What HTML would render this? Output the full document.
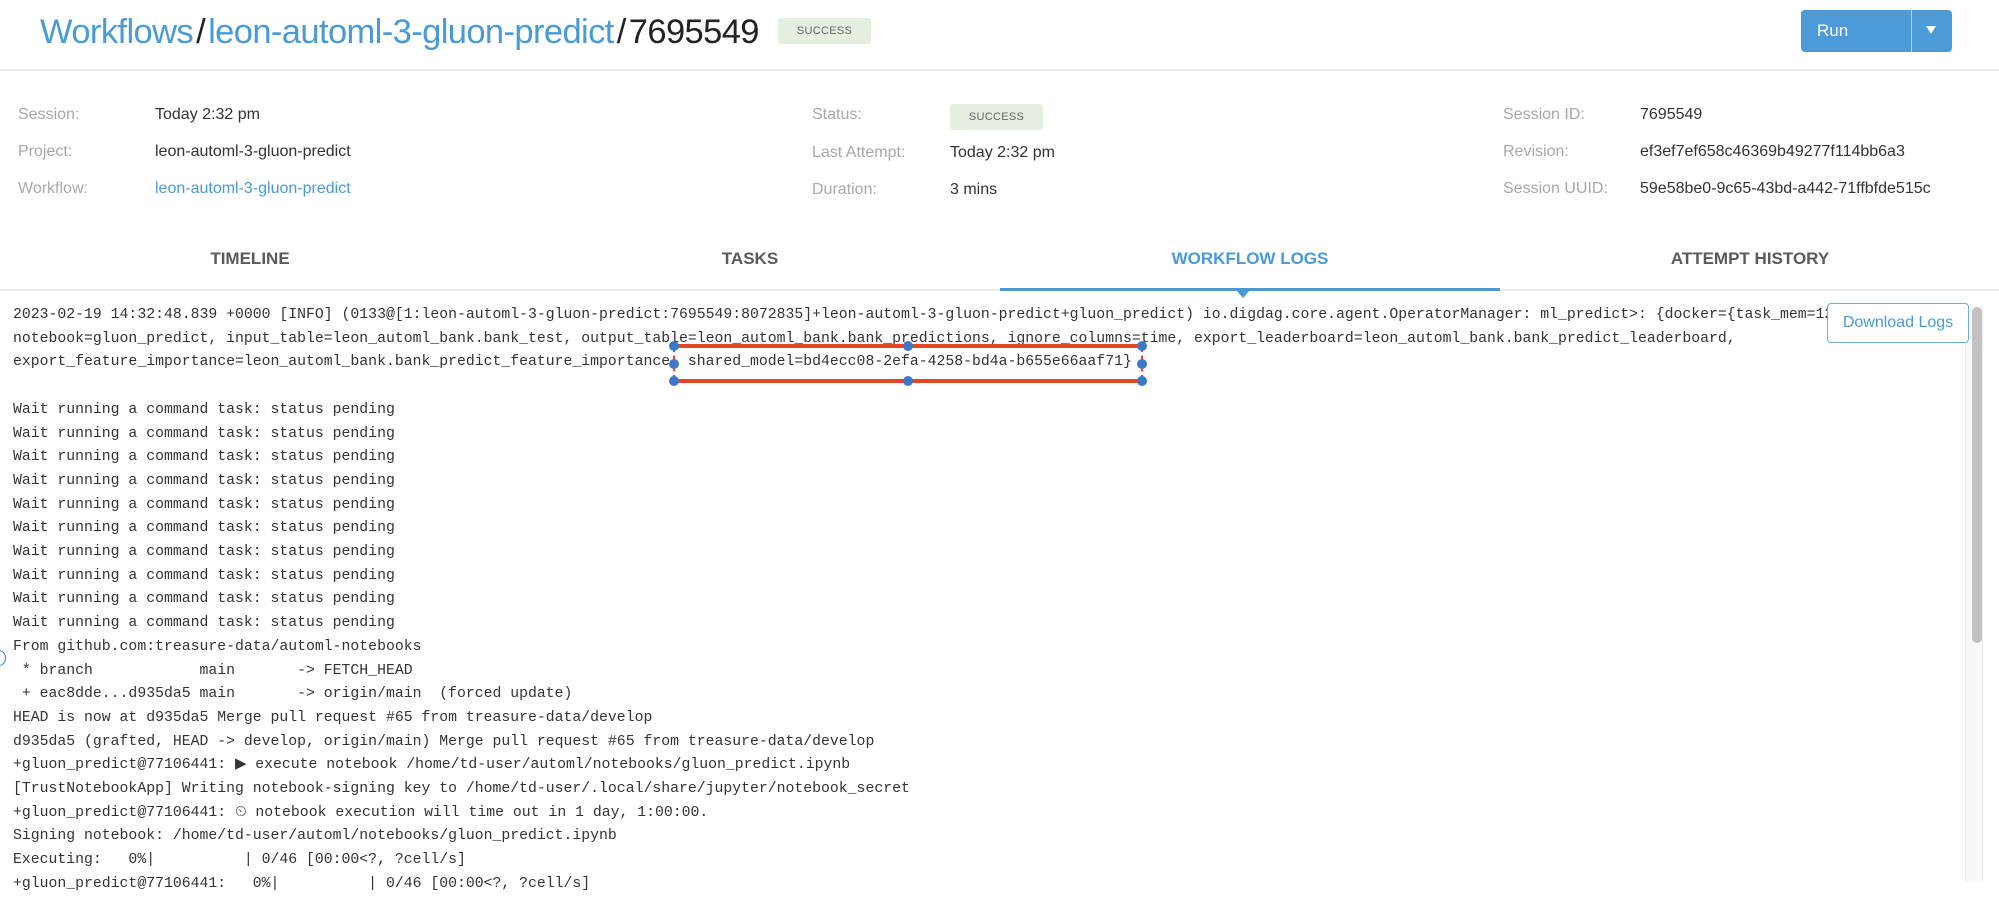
<!DOCTYPE html>
<html><head><meta charset="utf-8"><style>
*{margin:0;padding:0;box-sizing:border-box}
body{width:1999px;height:881px;overflow:hidden;background:#fff;font-family:"Liberation Sans",sans-serif;position:relative;color:#333}
.a{position:absolute;white-space:nowrap}
.blue{color:#4a9ad8}
.lbl{color:#a8a8a8;font-size:16px}
.val{color:#333;font-size:16px}
.badge{position:absolute;background:#e6efdf;color:#666;font-size:11px;border-radius:3px;text-align:center;letter-spacing:.3px}
.tab{position:absolute;top:249px;width:500px;text-align:center;font-size:17px;font-weight:bold;color:#5a5a5a}
.log{position:absolute;left:13px;top:304px;font-family:"Liberation Mono",monospace;font-size:14.8px;line-height:23.7px;color:#333;white-space:pre}
.dot{position:absolute;width:10px;height:10px;border-radius:50%;background:#3d78c8}
.sl{color:#222;margin:0 3px}
</style></head><body>
<div class="a" style="left:40px;top:10px;font-size:34.5px;line-height:44px;letter-spacing:-0.6px"><span class="blue">Workflows</span><span class="sl">/</span><span class="blue">leon-automl-3-gluon-predict</span><span class="sl">/</span><span style="color:#222">7695549</span></div>
<div class="badge" style="left:778px;top:18px;width:93px;height:26px;line-height:26px">SUCCESS</div>
<div class="a" style="left:1801px;top:10px;width:151px;height:42px;background:#4d9ad8;border-radius:4px"></div>
<div class="a" style="left:1911px;top:10px;width:1px;height:42px;background:#fff;opacity:.6"></div>
<div class="a" style="left:1817px;top:21px;color:#fff;font-size:17px">Run</div>
<div class="a" style="left:1926px;top:26px;width:0;height:0;border-left:5px solid transparent;border-right:5px solid transparent;border-top:8px solid #fff"></div>
<div class="a" style="left:0;top:69px;width:1999px;height:2px;background:#ebebeb"></div>

<div class="a lbl" style="left:18px;top:106px">Session:</div>
<div class="a val" style="left:155px;top:106px">Today 2:32 pm</div>
<div class="a lbl" style="left:18px;top:143px">Project:</div>
<div class="a val" style="left:155px;top:143px">leon-automl-3-gluon-predict</div>
<div class="a lbl" style="left:18px;top:180px">Workflow:</div>
<div class="a val blue" style="left:155px;top:180px;color:#4a9ad8">leon-automl-3-gluon-predict</div>

<div class="a lbl" style="left:812px;top:106px">Status:</div>
<div class="badge" style="left:950px;top:104px;width:93px;height:26px;line-height:26px">SUCCESS</div>
<div class="a lbl" style="left:812px;top:144px">Last Attempt:</div>
<div class="a val" style="left:950px;top:144px">Today 2:32 pm</div>
<div class="a lbl" style="left:812px;top:181px">Duration:</div>
<div class="a val" style="left:950px;top:181px">3 mins</div>

<div class="a lbl" style="left:1503px;top:106px">Session ID:</div>
<div class="a val" style="left:1640px;top:106px">7695549</div>
<div class="a lbl" style="left:1503px;top:143px">Revision:</div>
<div class="a val" style="left:1640px;top:143px">ef3ef7ef658c46369b49277f114bb6a3</div>
<div class="a lbl" style="left:1503px;top:180px">Session UUID:</div>
<div class="a val" style="left:1640px;top:180px">59e58be0-9c65-43bd-a442-71ffbfde515c</div>

<div class="tab" style="left:0">TIMELINE</div>
<div class="tab" style="left:500px">TASKS</div>
<div class="tab" style="left:1000px;color:#4a9ad8">WORKFLOW LOGS</div>
<div class="tab" style="left:1500px">ATTEMPT HISTORY</div>
<div class="a" style="left:0;top:289px;width:1999px;height:2px;background:#ebebeb"></div>
<div class="a" style="left:1000px;top:288px;width:500px;height:3px;background:#4a9ad8"></div>
<div class="a" style="left:1236px;top:290px;width:0;height:0;border-left:7px solid transparent;border-right:7px solid transparent;border-top:8px solid #4a9ad8"></div>

<div class="log">2023-02-19 14:32:48.839 +0000 [INFO] (0133@[1:leon-automl-3-gluon-predict:7695549:8072835]+leon-automl-3-gluon-predict+gluon_predict) io.digdag.core.agent.OperatorManager: ml_predict>: {docker={task_mem=12
notebook=gluon_predict, input_table=leon_automl_bank.bank_test, output_table=leon_automl_bank.bank_predictions, ignore_columns=time, export_leaderboard=leon_automl_bank.bank_predict_leaderboard,
export_feature_importance=leon_automl_bank.bank_predict_feature_importance, shared_model=bd4ecc08-2efa-4258-bd4a-b655e66aaf71}

Wait running a command task: status pending
Wait running a command task: status pending
Wait running a command task: status pending
Wait running a command task: status pending
Wait running a command task: status pending
Wait running a command task: status pending
Wait running a command task: status pending
Wait running a command task: status pending
Wait running a command task: status pending
Wait running a command task: status pending
From github.com:treasure-data/automl-notebooks
 * branch            main       -> FETCH_HEAD
 + eac8dde...d935da5 main       -> origin/main  (forced update)
HEAD is now at d935da5 Merge pull request #65 from treasure-data/develop
d935da5 (grafted, HEAD -> develop, origin/main) Merge pull request #65 from treasure-data/develop
+gluon_predict@77106441: ▶ execute notebook /home/td-user/automl/notebooks/gluon_predict.ipynb
[TrustNotebookApp] Writing notebook-signing key to /home/td-user/.local/share/jupyter/notebook_secret
+gluon_predict@77106441: ⏲ notebook execution will time out in 1 day, 1:00:00.
Signing notebook: /home/td-user/automl/notebooks/gluon_predict.ipynb
Executing:   0%|          | 0/46 [00:00&lt;?, ?cell/s]
+gluon_predict@77106441:   0%|          | 0/46 [00:00&lt;?, ?cell/s]</div>

<div class="a" style="left:674px;top:344px;width:468px;height:4px;background:#e8432b"></div>
<div class="a" style="left:674px;top:379px;width:468px;height:4px;background:#e8432b"></div>
<div class="a" style="left:673px;top:346px;width:2px;height:35px;border-left:2px dashed #e8432b"></div>
<div class="a" style="left:1141px;top:346px;width:2px;height:35px;border-left:2px dashed #e8432b"></div>
<div class="dot" style="left:669px;top:341px"></div><div class="dot" style="left:903px;top:341px"></div><div class="dot" style="left:1137px;top:341px"></div>
<div class="dot" style="left:669px;top:359px"></div><div class="dot" style="left:1137px;top:359px"></div>
<div class="dot" style="left:669px;top:376px"></div><div class="dot" style="left:903px;top:376px"></div><div class="dot" style="left:1137px;top:376px"></div>

<div class="a" style="left:-8px;top:650px;width:14px;height:16px;border:1.5px solid #3d78c8;border-radius:50%"></div>

<div class="a" style="left:1965px;top:305px;width:18px;height:576px;background:#f8f8f8;border-left:1px solid #ececec;border-right:1px solid #ececec"></div>
<div class="a" style="left:1972px;top:307px;width:10px;height:336px;background:#c1c1c1;border-radius:5px"></div>

<div class="a" style="left:1827px;top:303px;width:142px;height:40px;border:1.5px solid #6aaee2;border-radius:4px;background:#fff;color:#4a9ad8;font-size:16px;text-align:center;line-height:37px">Download Logs</div>
</body></html>
